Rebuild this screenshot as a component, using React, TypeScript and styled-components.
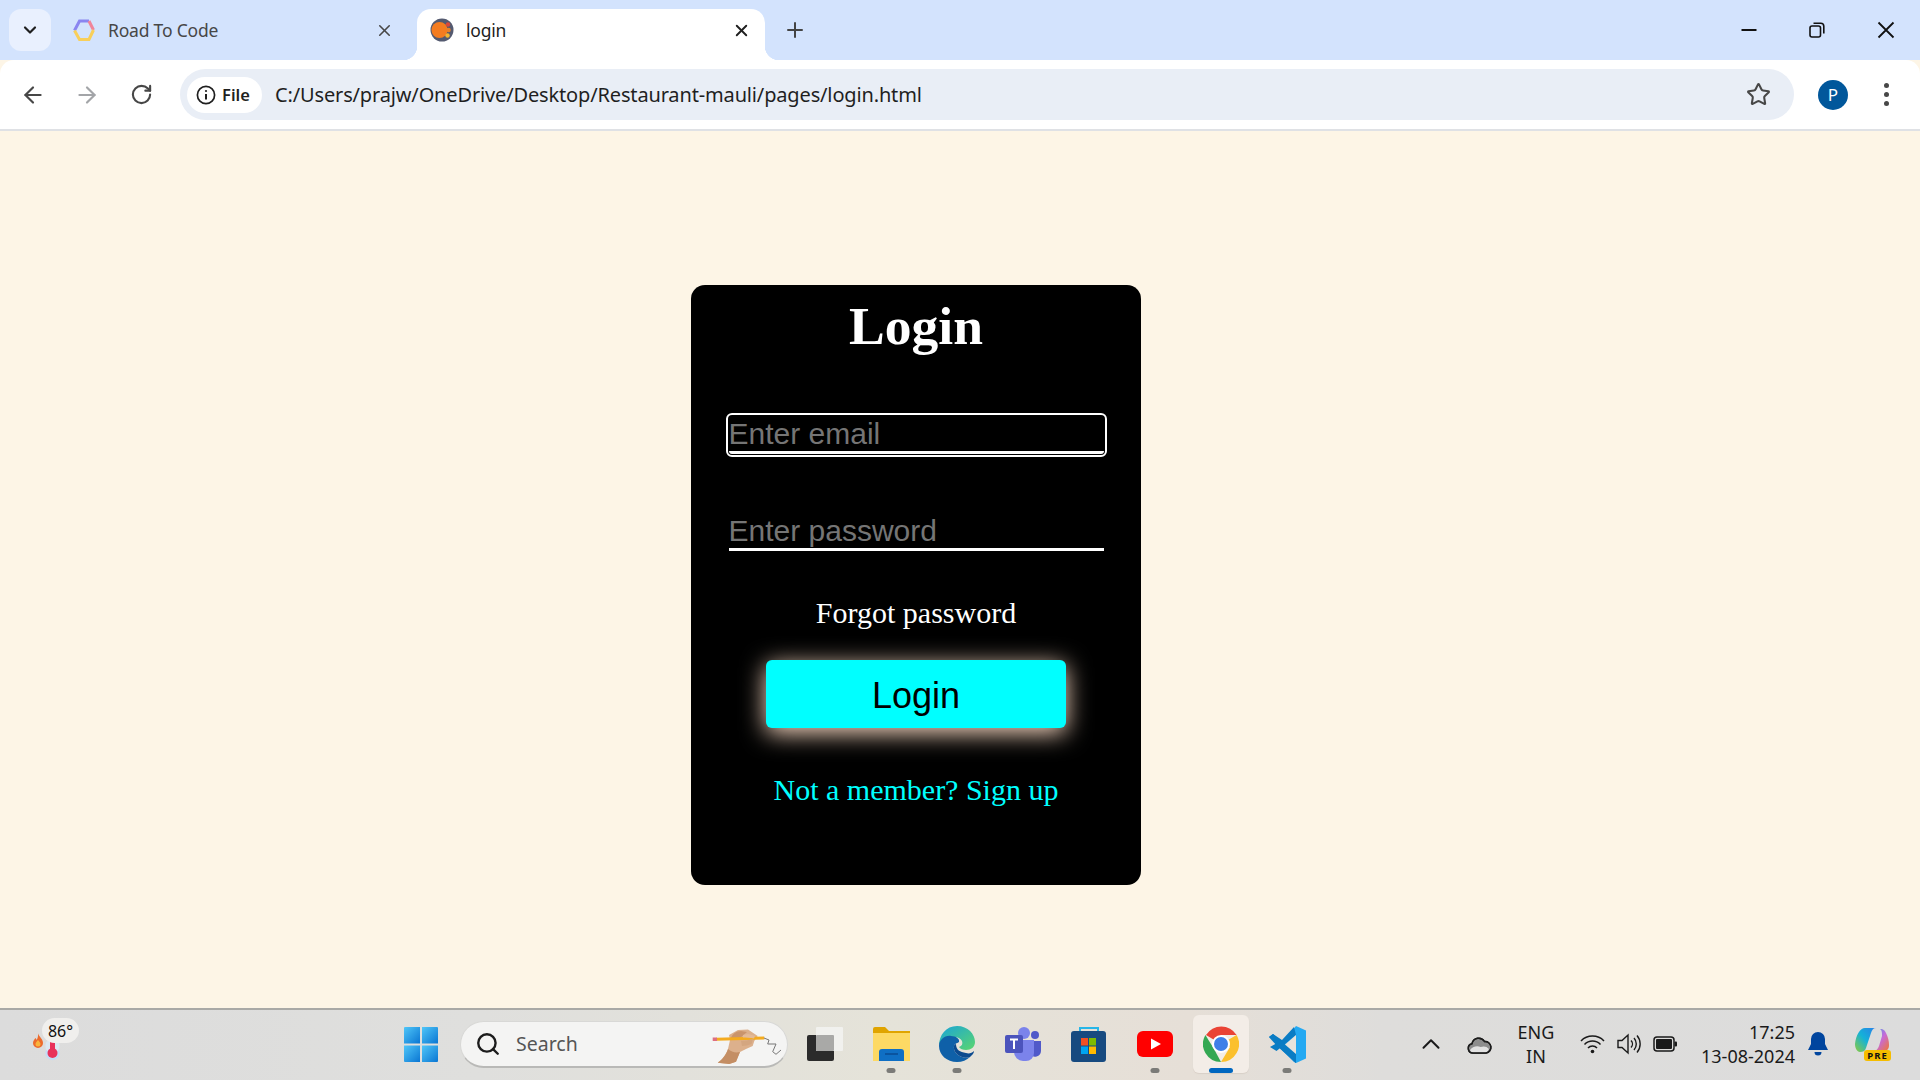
import styled, { createGlobalStyle } from "styled-components";
import { ArrowLeft, ArrowRight, ChevronDown, ChevronUp, Plus, RotateCw, Search as SearchIcon, Star, X } from "lucide-react";

const GlobalStyle = createGlobalStyle`
  html, body {
    margin: 0;
    padding: 0;
    height: 100%;
    overflow: hidden;
  }
  #root { height: 100%; }
  * { box-sizing: border-box; }
`;

const uiFont = `"Noto Sans", "Open Sans", sans-serif`;

const Screen = styled.div`
  width: 1920px;
  height: 1080px;
  display: flex;
  flex-direction: column;
  font-family: ${uiFont};
  background: #fdf5e6;
`;

const TabStrip = styled.div`
  height: 60px;
  flex: none;
  display: flex;
  align-items: flex-start;
  padding: 9px 0 0 9px;
  background: #d3e3fd;
`;

const TabMenu = styled.div`
  width: 42px;
  height: 42px;
  margin-right: 8px;
  display: flex;
  align-items: center;
  justify-content: center;
  border-radius: 12px;
  background: #e9f0fe;
  color: #1f1f1f;
`;

const Tab = styled.div<{ $active?: boolean }>`
  position: relative;
  width: ${(p) => (p.$active ? "348px" : "358px")};
  height: 51px;
  display: flex;
  align-items: center;
  padding: 0 ${(p) => (p.$active ? "14px" : "23px")} 9px 13px;
  border-radius: 14px 14px 0 0;
  background: ${(p) => (p.$active ? "#fff" : "transparent")};
  color: ${(p) => (p.$active ? "#1f1f1f" : "#474747")};

  ${(p) =>
    p.$active &&
    `
    &::before, &::after {
      content: "";
      position: absolute;
      bottom: 0;
      width: 14px;
      height: 14px;
    }
    &::before {
      left: -14px;
      background: radial-gradient(circle at 0 0, #d3e3fd 14px, #fff 14.5px);
    }
    &::after {
      right: -14px;
      background: radial-gradient(circle at 100% 0, #d3e3fd 14px, #fff 14.5px);
    }
  `}
`;

const TabTitle = styled.span`
  flex: 1;
  margin-left: 12px;
  font-size: 17.5px;
  letter-spacing: -0.2px;
`;

const NewTab = styled.div`
  width: 30px;
  height: 42px;
  margin-left: 15px;
  display: flex;
  align-items: center;
  justify-content: center;
  color: #444;
`;

const WindowButtons = styled.div`
  margin-left: auto;
  display: flex;
  align-items: center;
  height: 32px;
  padding-right: 23px;
  gap: 50px;
  margin-top: 5px;
  color: #111;
`;

const Toolbar = styled.div`
  height: 71px;
  flex: none;
  display: flex;
  align-items: center;
  padding: 0 0 0 19px;
  background: #fff;
  border-radius: 14px 14px 0 0;
  border-bottom: 2px solid #dfe1e5;
`;

const NavButton = styled.div<{ $off?: boolean }>`
  width: 28px;
  height: 28px;
  margin-right: 26px;
  display: flex;
  align-items: center;
  justify-content: center;
  color: ${(p) => (p.$off ? "#a3a5a8" : "#474747")};
`;

const Omnibox = styled.div`
  width: 1614px;
  height: 51px;
  margin-left: -1px;
  display: flex;
  align-items: center;
  padding: 0 23px 0 7px;
  border-radius: 26px;
  background: #e9eef6;
`;

const FileChip = styled.div`
  width: 75px;
  height: 36px;
  display: flex;
  align-items: center;
  gap: 6px;
  padding-left: 9px;
  border-radius: 18px;
  background: #fff;
  font-size: 16.5px;
  font-weight: 600;
  color: #1f1f1f;
`;

const Url = styled.span`
  flex: 1;
  margin-left: 13px;
  font-size: 20px;
  letter-spacing: -0.15px;
  color: #1f1f1f;
`;

const Avatar = styled.div`
  width: 30px;
  height: 30px;
  margin-left: 24px;
  display: flex;
  align-items: center;
  justify-content: center;
  border-radius: 50%;
  background: #01579b;
  color: #fff;
  font-size: 17px;
`;

const MenuDots = styled.div`
  width: 6px;
  margin-left: 36px;
  display: flex;
  flex-direction: column;
  gap: 4px;

  span {
    width: 5px;
    height: 5px;
    border-radius: 50%;
    background: #474747;
  }
`;

const Page = styled.main`
  flex: 1;
  padding: 154px 0 0 691px;
  background: #fdf5e6;
`;

const LoginCard = styled.form`
  width: 450px;
  height: 600px;
  display: flex;
  flex-direction: column;
  align-items: center;
  border-radius: 14px;
  background: #000;
  font-family: "Liberation Serif", "Times New Roman", serif;
`;

const Heading = styled.h1`
  margin: 9px 0 0;
  font-size: 53.5px;
  line-height: 64px;
  font-weight: 700;
  color: #fff;
`;

const Field = styled.input<{ $focused?: boolean }>`
  display: block;
  width: 375px;
  height: 38px;
  padding: 0;
  border: 0;
  border-bottom: 3px solid #fff;
  background: #000;
  color: #fff;
  font-family: "Liberation Sans", Arial, sans-serif;
  font-size: 30px;
  outline: ${(p) => (p.$focused ? "2px solid #fff" : "none")};
  outline-offset: 1px;
  border-radius: ${(p) => (p.$focused ? "3px" : "0")};

  &::placeholder {
    color: #757575;
    opacity: 1;
  }
`;

const EmailField = styled(Field)`
  margin-top: 58px;
`;

const PasswordField = styled(Field)`
  margin-top: 59px;
`;

const Forgot = styled.a`
  margin-top: 45px;
  font-size: 30px;
  line-height: 34px;
  color: #fff;
`;

const SubmitButton = styled.button`
  width: 300px;
  height: 68px;
  margin-top: 30px;
  padding: 3px 0 0;
  border: 0;
  border-radius: 6px;
  background: #0ff;
  color: #000;
  font-family: "Liberation Sans", Arial, sans-serif;
  font-size: 36px;
  box-shadow: 0 5px 25px #ffdfc8;
`;

const SignUp = styled.a`
  margin-top: 45px;
  font-size: 30px;
  line-height: 34px;
  color: #0ff;
`;

const Taskbar = styled.footer`
  height: 72px;
  flex: none;
  display: flex;
  align-items: center;
  padding-bottom: 2px;
  border-top: 2px solid #a9a9a6;
  background: linear-gradient(90deg, #dcdcdc 0%, #dfdfdd 25%, #e5e3d9 46%, #e6dfd7 62%, #dedddb 72%, #dcdcdc 100%);
`;

const Weather = styled.div`
  position: relative;
  width: 404px;
  height: 100%;
  flex: none;
`;

const WeatherIcon = styled.svg`
  position: absolute;
  left: 30px;
  top: 22px;
`;

const WeatherBadge = styled.span`
  position: absolute;
  left: 42px;
  top: 8px;
  width: 37px;
  height: 25px;
  display: flex;
  align-items: center;
  justify-content: center;
  border-radius: 13px;
  background: #f0efed;
  font-size: 16px;
  color: #111;
`;

const StartLogo = styled.svg`
  flex: none;
  margin-right: 22px;
`;

const SearchBox = styled.div`
  position: relative;
  width: 328px;
  height: 47px;
  flex: none;
  display: flex;
  align-items: center;
  gap: 15px;
  padding-left: 14px;
  border-radius: 24px;
  background: #f4f4f3;
  border: 1px solid #d8d8d6;
  border-bottom: 2px solid #b9b9b7;
  font-size: 19.5px;
  color: #555;
`;

const SearchArt = styled.svg`
  position: absolute;
  right: 2px;
  top: 0;
`;

const AppList = styled.div`
  display: flex;
  margin-left: 4px;
`;

const AppSlot = styled.div<{ $active?: boolean }>`
  position: relative;
  width: 66px;
  height: 58px;
  display: flex;
  align-items: center;
  justify-content: center;
  border-radius: 6px;
  background: ${(p) => (p.$active ? "#f3ede7" : "transparent")};
  box-shadow: ${(p) => (p.$active ? "0 1px 1px #d8d0c8" : "none")};
  ${(p) => p.$active && "width: 56px; margin: 0 5px;"}
`;

const RunDot = styled.span<{ $active?: boolean }>`
  position: absolute;
  bottom: 0;
  left: 50%;
  width: ${(p) => (p.$active ? "24px" : "9px")};
  height: 5px;
  transform: translateX(-50%);
  border-radius: 3px;
  background: ${(p) => (p.$active ? "#0067c0" : "#7b7b78")};
`;

const Tray = styled.div`
  margin-left: auto;
  display: flex;
  align-items: center;
  height: 100%;
  padding-right: 29px;
  color: #1a1a1a;
`;

const TraySlot = styled.div<{ $w: number; $gap?: number }>`
  width: ${(p) => p.$w}px;
  margin-left: ${(p) => p.$gap ?? 0}px;
  display: flex;
  justify-content: center;
  align-items: center;
`;

const Lang = styled.div`
  width: 60px;
  margin: 0 13px 0 12px;
  text-align: center;
  font-size: 18px;
  line-height: 24px;
`;

const Clock = styled.div`
  width: 116px;
  margin-left: 1px;
  padding-bottom: 1px;
  text-align: right;
  font-size: 18px;
  line-height: 24px;
`;

function WindowMinimize() {
  return (
    <svg width="20" height="20" viewBox="0 0 20 20" fill="none" stroke="currentColor" strokeWidth="2">
      <path d="M2.5 10h15" />
    </svg>
  );
}

function WindowRestore() {
  return (
    <svg width="16" height="16" viewBox="0 0 16 16" fill="none" stroke="currentColor" strokeWidth="1.6">
      <rect x="1" y="4" width="10.5" height="11" rx="2" />
      <path d="M4.5 1.2h7.3a3 3 0 0 1 3 3v7.3" />
    </svg>
  );
}

function WindowClose() {
  return (
    <svg width="22" height="22" viewBox="0 0 22 22" fill="none" stroke="currentColor" strokeWidth="1.8">
      <path d="M3.5 3.5l15 15M18.5 3.5l-15 15" />
    </svg>
  );
}

function RoadFavicon() {
  return (
    <svg width="24" height="24" viewBox="0 0 24 24" fill="none" strokeWidth="3">
      <path d="M2.5 12.5L7.5 3H17" stroke="#8a85f0" />
      <path d="M17 3L21.5 12" stroke="#f0849a" />
      <path d="M2.5 12.5L7.5 21.5H17L21.5 12" stroke="#f8cf5a" />
    </svg>
  );
}

function LoginFavicon() {
  return (
    <svg width="24" height="24" viewBox="0 0 24 24">
      <circle cx="12" cy="12" r="11.5" fill="#545a70" />
      <circle cx="9.5" cy="12" r="8" fill="#f47c20" />
      <circle cx="18" cy="6.5" r="2.2" fill="#d9483b" />
      <circle cx="18.5" cy="12" r="2.3" fill="#e8802a" />
      <circle cx="17.5" cy="17.5" r="2.2" fill="#f2b632" />
    </svg>
  );
}

function InfoIcon() {
  return (
    <svg width="20" height="20" viewBox="0 0 20 20" fill="none" stroke="#1f1f1f" strokeWidth="1.7">
      <circle cx="10" cy="10" r="8.6" />
      <path d="M10 9v5.5" strokeWidth="2" />
      <circle cx="10" cy="6" r="1.1" fill="#1f1f1f" stroke="none" />
    </svg>
  );
}

function WeatherArt() {
  return (
    <WeatherIcon width="34" height="30" viewBox="0 0 34 30">
      <path d="M8 1.5c1 3 5 5.500 5 9.500a5 5 0 0 1-10 0c0-2.500 1.500-3.500 2.500-5 .5.500 1 1.500 1.300 2C7.500 6 8.500 4 8 1.500z" fill="#ec6b2d" />
      <path d="M8 8c1 1.500 2.500 2.500 2.500 4a2.500 2.500 0 0 1-5 0c0-1.500 1.500-2.500 2.500-4z" fill="#f9b43c" />
      <circle cx="22.5" cy="21" r="7.2" fill="#c4dcf6" />
      <rect x="15.5" y="8" width="14" height="12" rx="5" fill="#dce8f2" />
      <rect x="20" y="6" width="5" height="14" fill="#e8315b" />
      <circle cx="22.5" cy="21" r="5" fill="#e8315b" />
    </WeatherIcon>
  );
}

function WindowsLogo() {
  return (
    <StartLogo width="34" height="35" viewBox="0 0 34 35">
      <defs>
        <linearGradient id="winA" x1="0" y1="0" x2="1" y2="1">
          <stop offset="0" stopColor="#4fc6f8" />
          <stop offset="1" stopColor="#0a76d3" />
        </linearGradient>
      </defs>
      <path d="M1 0H16V16.5H0V1a1 1 0 0 1 1-1z" fill="url(#winA)" />
      <path d="M18 0H33a1 1 0 0 1 1 1V16.5H18z" fill="url(#winA)" />
      <path d="M0 18.5H16V35H1a1 1 0 0 1-1-1z" fill="url(#winA)" />
      <path d="M18 18.5H34V34a1 1 0 0 1-1 1H18z" fill="url(#winA)" />
    </StartLogo>
  );
}

function PencilHand() {
  return (
    <SearchArt width="74" height="43" viewBox="0 0 74 43" fill="none">
      <path d="M6.7 40.7C11 38 15 33 17 27L19 18 18 13 27 8 37 7.5 46.7 14 43.3 19 41.7 24 35 27 29 30 25 39.7 18.3 42Z" fill="#dcb08c" />
      <path d="M17 27C15 33 11 38 6.700 40.700L18.300 42 25 39.700 29 30C24.500 31 20.500 30 17 27z" fill="#c48e64" />
      <path d="M19 18c2-6 6-9 11-9l6 1-7 6z" fill="#c9946c" />
      <path d="M5 17.200L53.300 16" stroke="#f4ab1f" strokeWidth="3" />
      <path d="M1.700 17.300L6 17.200" stroke="#de6f80" strokeWidth="3.400" />
      <path d="M32 13c3-1 7-1 12 1l-1 2.500c-4-1-8-1-11-1z" fill="#e3ba98" />
      <path d="M30 19c3 0 8-1 12-2l-1.500 5c-3 1-6 2-9.500 2z" fill="#d4a680" />
      <path d="M53 16L58 18L56.700 22L65 22L61.700 29.700L65 32.300L70 28" stroke="#777" strokeWidth="1" />
    </SearchArt>
  );
}

function TaskViewIcon() {
  return (
    <svg width="36" height="36" viewBox="0 0 36 36">
      <rect x="0" y="9" width="27" height="26" rx="2" fill="#2b2b2b" />
      <rect x="9" y="1" width="27" height="24" rx="1" fill="#f1f1ee" />
      <rect x="9" y="9" width="18" height="16" rx="1" fill="#a9a9a7" />
    </svg>
  );
}

function FilesIcon() {
  return (
    <svg width="37" height="34" viewBox="0 0 37 34">
      <path d="M0 2a2 2 0 0 1 2-2h10l4 4h21v30H0z" fill="#e0a400" />
      <path d="M0 6h37v28H0z" fill="#fdd964" />
      <path d="M6 25a3 3 0 0 1 3-3h19a3 3 0 0 1 3 3v9H6z" fill="#0f6fc4" />
      <path d="M12 27h13" stroke="#0a4f96" strokeWidth="1.6" />
    </svg>
  );
}

function EdgeIcon() {
  return (
    <svg width="36" height="36" viewBox="0 0 36 36">
      <defs>
        <linearGradient id="edgeTop" x1="0" y1="0" x2="1" y2="1">
          <stop offset="0" stopColor="#1aa4d8" />
          <stop offset="1" stopColor="#5ad66e" />
        </linearGradient>
      </defs>
      <path d="M18 0c11 0 18 8 18 16 0 5-4 8-9 8-3 0-6-1-7-3 3-1 4-3 3-6-2-4-8-5-13-3C3 14 .5 17 0 20 0 9 7 0 18 0z" fill="url(#edgeTop)" />
      <path d="M0 20c0-6 6-11 12-10 5 0 9 3 8 6-1 1-4 1-5 4-1 5 3 9 8 11 2 1 5 1 8 0-3 3-8 5-13 5C8 36 0 29 0 20z" fill="#0f60a8" />
      <path d="M15 20c-1 5 3 9 8 11 2 1 5 1 8 0l1-1c2-2 3-3 3-5-2 2-5 3-8 2-6-1-10-3-10-9-1 0-2 1-2 2z" fill="#0b4a8f" />
    </svg>
  );
}

function TeamsIcon() {
  return (
    <svg width="36" height="34" viewBox="0 0 36 34">
      <circle cx="19" cy="6" r="6" fill="#7b83eb" />
      <circle cx="30" cy="8" r="4" fill="#5059c9" />
      <path d="M24 14h12v10a6 6 0 0 1-11 3z" fill="#5059c9" />
      <path d="M9 13h20v13a8 8 0 0 1-8 8h-3a9 9 0 0 1-9-9z" fill="#7b83eb" />
      <rect x="0" y="8" width="18" height="18" rx="2" fill="#4b53bc" />
      <path d="M5 12.5h8M9 12.5V22" stroke="#fff" strokeWidth="2" />
    </svg>
  );
}

function StoreIcon() {
  return (
    <svg width="36" height="36" viewBox="0 0 36 36">
      <path d="M9 6V2h18v4" fill="none" stroke="#27b6e8" strokeWidth="2" />
      <rect x="0" y="5" width="35" height="31" rx="3" fill="#174a80" />
      <rect x="10" y="12" width="7" height="7.5" fill="#f25022" />
      <rect x="18" y="12" width="7" height="7.5" fill="#7fba00" />
      <rect x="10" y="20.5" width="7" height="7.5" fill="#00a4ef" />
      <rect x="18" y="20.5" width="7" height="7.5" fill="#ffb900" />
    </svg>
  );
}

function YouTubeIcon() {
  return (
    <svg width="36" height="26" viewBox="0 0 36 26">
      <rect width="36" height="26" rx="6" fill="#f00" />
      <path d="M14 7.5L24 13l-10 5.5z" fill="#fff" />
    </svg>
  );
}

function ChromeIcon() {
  return (
    <svg width="36" height="36" viewBox="0 0 36 36">
      <path d="M18 18L3 9A18 18 0 0 1 33.6 9H18z" fill="#ea4335" />
      <path d="M18 18L33.6 9A18 18 0 0 1 18 36l9-15z" fill="#fbc02d" />
      <path d="M18 36A18 18 0 0 1 2.4 9L11 23z" fill="#34a853" />
      <circle cx="18" cy="18" r="9" fill="#fff" />
      <circle cx="18" cy="18" r="7" fill="#3f7fe8" />
    </svg>
  );
}

function VsCodeIcon() {
  return (
    <svg width="37" height="37" viewBox="0 0 37 37">
      <path d="M27 0l10 4.5v28L27 37 10 21z" fill="#24a9f2" />
      <path d="M27 0v37l-2-1L11 22l16-13V0z" fill="#1c93de" />
      <path d="M27 9L7.5 25 1 21l7-4-8-6 4-3 9 6L25 1z" fill="#0a7cc4" />
      <path d="M0 11l4-3 23 20v9L8 20z" fill="#0a7cc4" />
      <path d="M27 9v19L16 18.5z" fill="#e7e3dc" />
    </svg>
  );
}

function CloudIcon() {
  return (
    <svg width="25" height="19" viewBox="0 0 25 19" stroke="#1c1c1c" strokeWidth="1.4">
      <path d="M6 18a4.7 4.7 0 0 1-1-9.3A6.8 6.8 0 0 1 17.5 6.5 5.8 5.8 0 0 1 19 18z" fill="#8d8d8d" />
      <path d="M3 15c2-3 7-5 10.5-3 3-1 6-1 8.500 2-1 2.500-2 3.500-3.500 3.500H6c-1.500 0-2.500-1-3-2.500z" fill="#e2e2e2" strokeWidth="0" />
      <path d="M6 18a4.7 4.7 0 0 1-1-9.3A6.8 6.8 0 0 1 17.5 6.5 5.8 5.8 0 0 1 19 18z" fill="none" />
    </svg>
  );
}

function WifiIcon() {
  return (
    <svg width="25" height="20" viewBox="0 0 25 20" fill="none" stroke="#1a1a1a" strokeWidth="1.5">
      <path d="M1 7a16 16 0 0 1 23 0" />
      <path d="M4.5 10.5a11 11 0 0 1 16 0" />
      <path d="M8 14a6 6 0 0 1 9 0" />
      <circle cx="12.5" cy="17.5" r="1.8" fill="#1a1a1a" stroke="none" />
    </svg>
  );
}

function SpeakerIcon() {
  return (
    <svg width="25" height="22" viewBox="0 0 25 22" fill="none" stroke="#1a1a1a" strokeWidth="1.4">
      <path d="M1 7.5h4L11 2v18l-6-5.5H1z" />
      <path d="M14 7.5a5 5 0 0 1 0 7" />
      <path d="M17 5a9 9 0 0 1 0 12" />
      <path d="M20 2.5a13 13 0 0 1 0 17" />
    </svg>
  );
}

function BatteryIcon() {
  return (
    <svg width="24" height="16" viewBox="0 0 24 16">
      <rect x="1" y="1" width="20" height="14" rx="3" fill="none" stroke="#1a1a1a" strokeWidth="1.5" />
      <rect x="3" y="3" width="16" height="10" rx="1" fill="#1a1a1a" />
      <rect x="21.5" y="5.5" width="2.5" height="5" rx="1" fill="#1a1a1a" />
    </svg>
  );
}

function BellIcon() {
  return (
    <svg width="20" height="24" viewBox="0 0 20 24" fill="#00459e">
      <path d="M10 0a7 7 0 0 1 7 7v5l3 6H0l3-6V7a7 7 0 0 1 7-7z" />
      <path d="M6.5 20h7a3.5 3.5 0 0 1-7 0z" />
    </svg>
  );
}

function CopilotIcon() {
  return (
    <svg width="36" height="36" viewBox="0 0 36 36">
      <defs>
        <linearGradient id="copA" x1="0" y1="1" x2="1" y2="0">
          <stop offset="0" stopColor="#8ecb3a" />
          <stop offset="0.5" stopColor="#14b2d8" />
          <stop offset="1" stopColor="#2b7ee8" />
        </linearGradient>
        <linearGradient id="copB" x1="0" y1="0" x2="1" y2="1">
          <stop offset="0" stopColor="#3aa0ee" />
          <stop offset="0.5" stopColor="#c76ad8" />
          <stop offset="1" stopColor="#f0782e" />
        </linearGradient>
      </defs>
      <path d="M10 2h11c-3 0-4 2-5 5l-5 15c-1 3-3 4-6 4C2 26 0 22 0 18 1 9 5 2 10 2z" fill="url(#copA)" />
      <path d="M25 3c4 0 5 2 6 4 2 4 3 8 3 12 0 4-2 6-5 6H18c3 0 5-2 6-5l3-10c0-3 0-6-2-7z" fill="url(#copB)" />
      <rect x="9" y="24" width="27" height="11" rx="3" fill="#f5bd00" />
      <text x="22.5" y="32.8" textAnchor="middle" fontSize="9.5" fontWeight="700" fill="#111" letterSpacing="1">PRE</text>
    </svg>
  );
}

export default function App() {
  return (
    <Screen>
      <GlobalStyle />
      <TabStrip>
        <TabMenu>
          <ChevronDown size={20} strokeWidth={2.6} />
        </TabMenu>
        <Tab>
          <RoadFavicon />
          <TabTitle>Road To Code</TabTitle>
          <X size={19} strokeWidth={2} />
        </Tab>
        <Tab $active>
          <LoginFavicon />
          <TabTitle>login</TabTitle>
          <X size={19} strokeWidth={2.4} />
        </Tab>
        <NewTab>
          <Plus size={24} strokeWidth={2} />
        </NewTab>
        <WindowButtons>
          <WindowMinimize />
          <WindowRestore />
          <WindowClose />
        </WindowButtons>
      </TabStrip>

      <Toolbar>
        <NavButton>
          <ArrowLeft size={26} strokeWidth={2} />
        </NavButton>
        <NavButton $off>
          <ArrowRight size={26} strokeWidth={2} />
        </NavButton>
        <NavButton>
          <RotateCw size={23} strokeWidth={2.2} />
        </NavButton>
        <Omnibox>
          <FileChip>
            <InfoIcon />
            File
          </FileChip>
          <Url>C:/Users/prajw/OneDrive/Desktop/Restaurant-mauli/pages/login.html</Url>
          <Star size={25} strokeWidth={2} color="#474747" />
        </Omnibox>
        <Avatar>P</Avatar>
        <MenuDots>
          <span />
          <span />
          <span />
        </MenuDots>
      </Toolbar>

      <Page>
        <LoginCard>
          <Heading>Login</Heading>
          <EmailField $focused placeholder="Enter email" />
          <PasswordField type="password" placeholder="Enter password" />
          <Forgot>Forgot password</Forgot>
          <SubmitButton type="button">Login</SubmitButton>
          <SignUp>Not a member? Sign up</SignUp>
        </LoginCard>
      </Page>

      <Taskbar>
        <Weather>
          <WeatherArt />
          <WeatherBadge>86°</WeatherBadge>
        </Weather>
        <WindowsLogo />
        <SearchBox>
          <SearchIcon size={26} strokeWidth={2.2} color="#1c1c1c" />
          Search
          <PencilHand />
        </SearchBox>
        <AppList>
          <AppSlot><TaskViewIcon /></AppSlot>
          <AppSlot><FilesIcon /><RunDot /></AppSlot>
          <AppSlot><EdgeIcon /><RunDot /></AppSlot>
          <AppSlot><TeamsIcon /></AppSlot>
          <AppSlot><StoreIcon /></AppSlot>
          <AppSlot><YouTubeIcon /><RunDot /></AppSlot>
          <AppSlot $active><ChromeIcon /><RunDot $active /></AppSlot>
          <AppSlot><VsCodeIcon /><RunDot /></AppSlot>
        </AppList>
        <Tray>
          <TraySlot $w={30}><ChevronUp size={30} strokeWidth={1.6} /></TraySlot>
          <TraySlot $w={30} $gap={18}><CloudIcon /></TraySlot>
          <Lang>ENG<br />IN</Lang>
          <TraySlot $w={26}><WifiIcon /></TraySlot>
          <TraySlot $w={26} $gap={11}><SpeakerIcon /></TraySlot>
          <TraySlot $w={26} $gap={10}><BatteryIcon /></TraySlot>
          <Clock>17:25<br />13-08-2024</Clock>
          <TraySlot $w={22} $gap={12}><BellIcon /></TraySlot>
          <TraySlot $w={36} $gap={26}><CopilotIcon /></TraySlot>
        </Tray>
      </Taskbar>
    </Screen>
  );
}
